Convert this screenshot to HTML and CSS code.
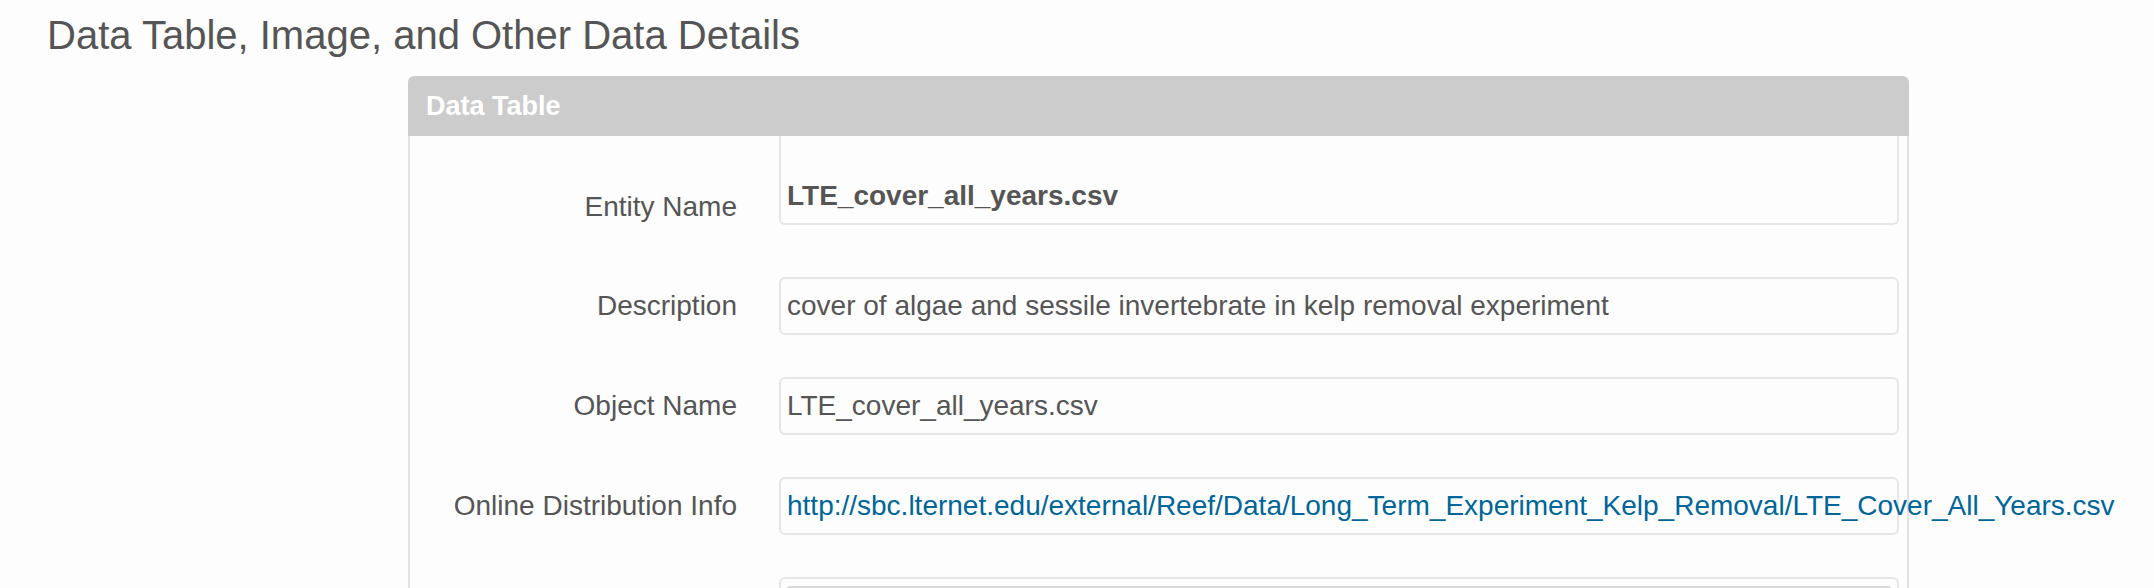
FILE: index.html
```html
<!DOCTYPE html>
<html lang="en">
<head>
<meta charset="utf-8">
<title>Data Table, Image, and Other Data Details</title>
<link rel="stylesheet" href="styles.css">
</head>
<body>
<h2 class="page-title">Data Table, Image, and Other Data Details</h2>
<div class="layout">
  <section class="panel">
    <div class="panel-heading">Data Table</div>
    <div class="panel-body">
      <div class="row row-entity">
        <div class="label">Entity Name</div>
        <div class="value value-entity"><strong>LTE_cover_all_years.csv</strong></div>
      </div>
      <div class="row">
        <div class="label">Description</div>
        <div class="value">cover of algae and sessile invertebrate in kelp removal experiment</div>
      </div>
      <div class="row">
        <div class="label">Object Name</div>
        <div class="value">LTE_cover_all_years.csv</div>
      </div>
      <div class="row">
        <div class="label">Online Distribution Info</div>
        <div class="value"><a class="link" href="#">http://sbc.lternet.edu/external/Reef/Data/Long_Term_Experiment_Kelp_Removal/LTE_Cover_All_Years.csv</a></div>
      </div>
      <div class="row">
        <div class="label"></div>
        <div class="value"><div class="nested"></div></div>
      </div>
    </div>
  </section>
</div>
</body>
</html>
```
FILE: styles.css
```css
body {
  margin: 0;
  background: #fdfdfd;
  font-family: "Liberation Sans", Arial, Helvetica, sans-serif;
  color: #555;
}

.page-title {
  margin: 13px 0 0 47px;
  font-size: 40px;
  font-weight: normal;
  line-height: 44px;
  color: #555;
}

.layout {
  padding: 19px 0 0 408px;
}

.panel {
  width: 1501px;
}

.panel-heading {
  height: 60px;
  line-height: 60px;
  padding-left: 18px;
  background: #ccc;
  border-radius: 6px 6px 0 0;
  font-size: 27px;
  font-weight: bold;
  color: #fff;
}

.panel-body {
  display: flex;
  flex-direction: column;
  gap: 42px;
  padding: 0 8px 40px 0;
  border: 2px solid #e2e2e2;
  border-top: 0;
}

.row {
  display: flex;
  gap: 42px;
}

.label {
  flex: none;
  width: 327px;
  padding-top: 9px;
  text-align: right;
  font-size: 28px;
  line-height: 40px;
  color: #555;
}

.value {
  flex: none;
  width: 1120px;
  box-sizing: border-box;
  padding: 7px 6px;
  border: 2px solid #e6e6e6;
  border-radius: 6px;
  font-size: 28px;
  line-height: 40px;
  white-space: nowrap;
  color: #555;
}

.row-entity {
  margin-bottom: 10px;
}

.row-entity .label {
  align-self: flex-end;
  padding-top: 0;
  margin-bottom: -2px;
}

.value-entity {
  display: flex;
  align-items: flex-end;
  height: 89px;
  border-top: 0;
  border-radius: 0 0 6px 6px;
}

.link {
  color: #006699;
  text-decoration: none;
}

.nested {
  height: 80px;
  border-top: 2px solid #d9d9d9;
  border-radius: 3px 3px 0 0;
}
```
